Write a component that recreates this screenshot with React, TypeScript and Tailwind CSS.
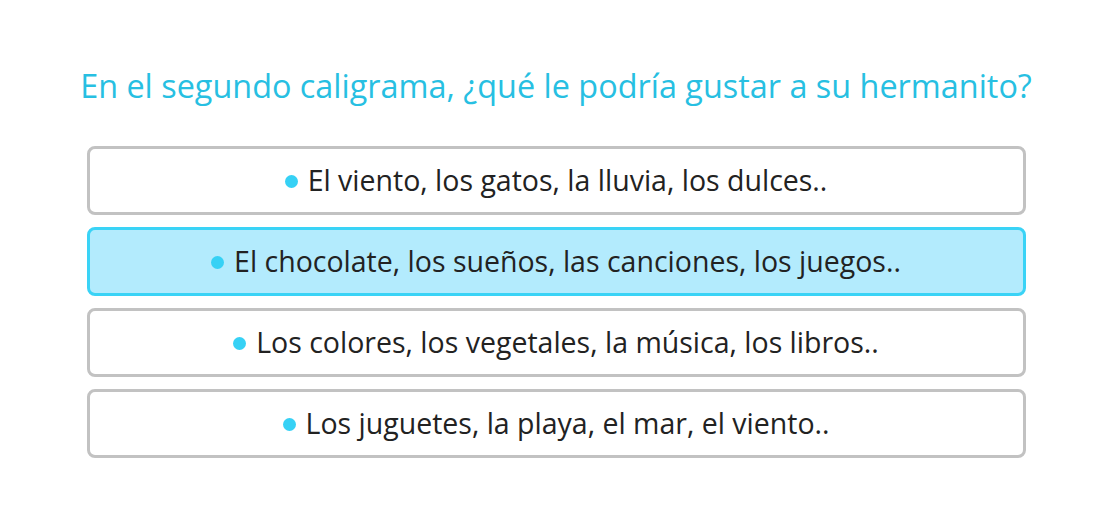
import React from "react";

const options = [
  "El viento, los gatos, la lluvia, los dulces..",
  "El chocolate, los sueños, las canciones, los juegos..",
  "Los colores, los vegetales, la música, los libros..",
  "Los juguetes, la playa, el mar, el viento..",
];

export default function App() {
  return (
    <div
      className="w-[1107px] h-[532px] bg-white flex flex-col items-center pl-[5px]"
      style={{ fontFamily: '"Open Sans", "Noto Sans", sans-serif' }}
    >
      <h1 className="mt-[61px] text-[32.4px] leading-[48px] text-[#27bfe2] font-normal whitespace-nowrap">
        En el segundo caligrama, ¿qué le podría gustar a su hermanito?
      </h1>
      <div className="mt-[37px] w-[939px] flex flex-col gap-[12px]">
        {options.map((o, i) => (
          <div
            key={i}
            className={
              "h-[69px] rounded-[8px] border-[3px] flex items-center justify-center text-[28.5px] text-[#222] " +
              (i === 1 ? "bg-[#b3ebfd] border-[#3ad3f6]" : "bg-white border-[#c2c2c2]")
            }
          >
            <span className="w-[13px] h-[13px] rounded-full bg-[#36d1f5] mr-[10px] mt-[2px]" />
            <span>{o}</span>
          </div>
        ))}
      </div>
    </div>
  );
}
